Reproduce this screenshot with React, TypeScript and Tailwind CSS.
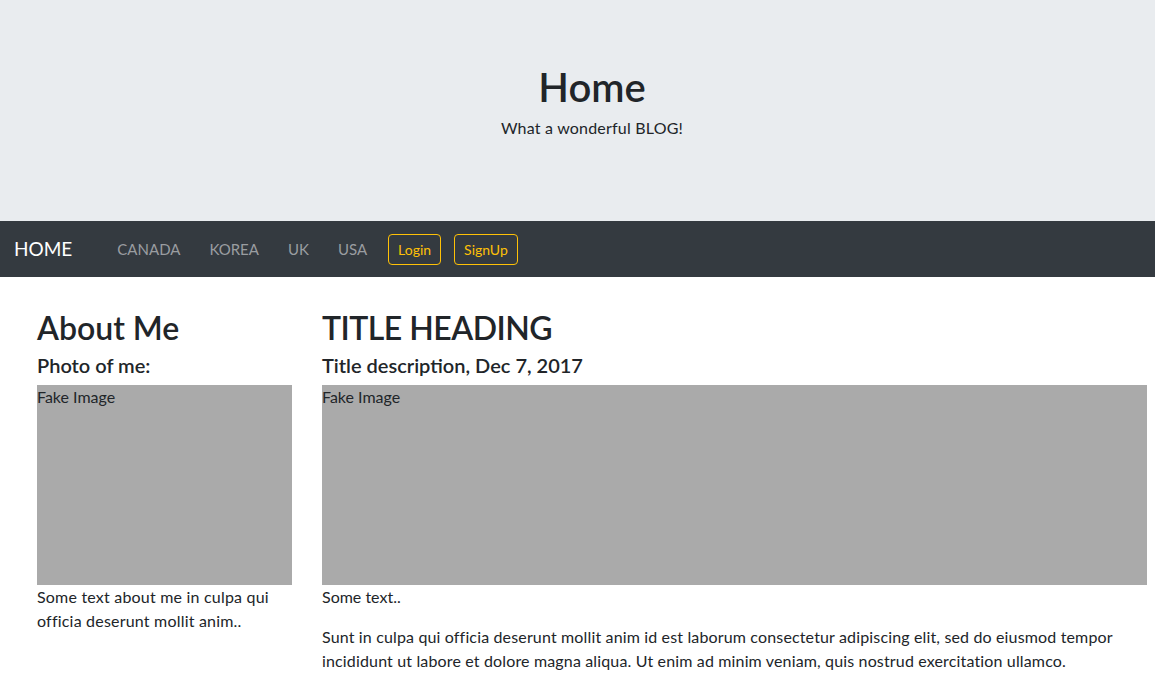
import React from 'react';

const NAV_LINKS = ['CANADA', 'KOREA', 'UK', 'USA'];

const FakeImage: React.FC = () => (
  <div className="h-[200px] w-full bg-[#aaaaaa] leading-6">Fake Image</div>
);

const App: React.FC = () => {
  return (
    <div
      className="min-h-[695px] bg-white text-[16px] leading-6 text-[#212529]"
      style={{ fontFamily: 'Lato, "Liberation Sans", sans-serif' }}
    >
      {/* Jumbotron */}
      <div className="h-[221px] bg-[#e9ecef] pl-[29px] pt-[63px] text-center">
        <h1 className="mb-[5px] text-[40px] font-semibold leading-[48px]">Home</h1>
        <p className="tracking-[0.2px]">What a wonderful BLOG!</p>
      </div>

      {/* Navbar */}
      <nav className="flex h-[56px] items-center bg-[#343a40] pl-[14px]">
        <span className="mr-[45px] text-[19px] text-white">HOME</span>
        <div className="flex items-center gap-[29px]">
          {NAV_LINKS.map((link) => (
            <span key={link} className="text-[15px] text-[#9a9da0]">
              {link}
            </span>
          ))}
        </div>
        <div className="ml-[21px] flex items-center gap-[13px]">
          <button className="h-[31px] rounded border border-[#ffc107] px-[9px] text-[14px] leading-[21px] text-[#ffc107]">
            Login
          </button>
          <button className="h-[31px] rounded border border-[#ffc107] px-[9px] text-[14px] leading-[21px] text-[#ffc107]">
            SignUp
          </button>
        </div>
      </nav>

      {/* Content */}
      <div className="flex gap-[30px] pl-[37px] pr-[8px] pt-[32px]">
        <div className="w-[255px] shrink-0">
          <h2 className="mb-[6px] text-[32px] font-semibold leading-[38px]">About Me</h2>
          <h5 className="mb-2 text-[20px] font-semibold leading-6">Photo of me:</h5>
          <FakeImage />
          <p className="tracking-[0.2px]">Some text about me in culpa qui officia deserunt mollit anim..</p>
        </div>
        <div className="flex-1">
          <h2 className="mb-[6px] text-[32px] font-semibold leading-[38px] tracking-[-0.5px]">TITLE HEADING</h2>
          <h5 className="mb-2 text-[20px] font-semibold leading-6">Title description, Dec 7, 2017</h5>
          <FakeImage />
          <p className="mb-4">Some text..</p>
          <p className="tracking-[0.15px]">
            Sunt in culpa qui officia deserunt mollit anim id est laborum consectetur adipiscing elit, sed do
            eiusmod tempor incididunt ut labore et dolore magna aliqua. Ut enim ad minim veniam, quis nostrud
            exercitation ullamco.
          </p>
        </div>
      </div>
    </div>
  );
};

export default App;
